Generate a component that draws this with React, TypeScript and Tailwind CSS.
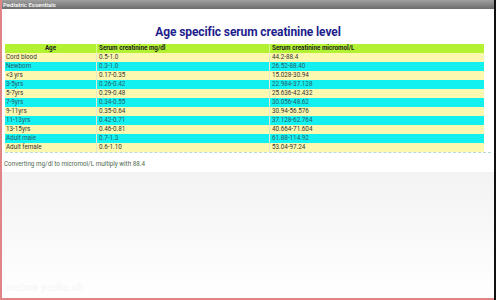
import React from "react";

const rows: [string, string, string][] = [
  ["Cord blood", "0.5-1.0", "44.2-88.4"],
  ["Newborn", "0.3-1.0", "26.52-88.40"],
  ["<3 yrs", "0.17-0.35", "15.028-30.94"],
  ["3-5yrs", "0.26-0.42", "22.984-37.128"],
  ["5-7yrs", "0.29-0.48", "25.636-42.432"],
  ["7-9yrs", "0.34-0.55", "30.056-48.62"],
  ["9-11yrs", "0.35-0.64", "30.94-56.576"],
  ["11-13yrs", "0.42-0.71", "37.128-62.764"],
  ["13-15yrs", "0.46-0.81", "40.664-71.604"],
  ["Adult male", "0.7-1.3", "61.88-114.92"],
  ["Adult female", "0.6-1.10", "53.04-97.24"],
];

export default function App() {
  return (
    <div
      className="w-[496px] h-[300px] flex overflow-hidden bg-white"
      style={{ fontFamily: "Roboto, 'Liberation Sans', sans-serif" }}
    >
      <div className="flex-1 flex flex-col border-l-[2px] border-b-[2px] border-[#e08585]">
        <div className="h-[9px] bg-gradient-to-b from-[#a0a0a0] to-[#6c6c6c] text-white text-[6px] leading-[9px] pl-[1px] font-medium">
          Pediatric Essentials
        </div>
        <div className="h-[13px]" />
        <h1 className="text-center text-[12px] tracking-[-0.1px] leading-[20px] font-bold text-[#1e1e8c]">
          Age specific serum creatinine level
        </h1>
        <div className="h-[2px]" />
        <div className="ml-[3px] w-[479px] text-[6.3px] leading-[9px] text-[#333]">
          <div className="grid grid-cols-[92px_173px_1fr] bg-[#b2f232] font-bold text-[#222] h-[9px]">
            <div className="text-center border-r border-[#d8f890]">Age</div>
            <div className="pl-[2px] border-r border-[#d8f890]">Serum creatinine mg/dl</div>
            <div className="pl-[2px]">Serum creatinine micromol/L</div>
          </div>
          {rows.map((r, i) => (
            <div
              key={i}
              className={
                "grid grid-cols-[92px_173px_1fr] h-[9px] " +
                (i % 2 === 0 ? "bg-[#fdf8b0] text-[#333]" : "bg-[#12f0f0] text-[#2a5c6a]")
              }
            >
              <div className="pl-[1px] border-r border-[#e8e8d0]">{r[0]}</div>
              <div className="pl-[2px] border-r border-[#e8e8d0]">{r[1]}</div>
              <div className="pl-[2px]">{r[2]}</div>
            </div>
          ))}
        </div>
        <div className="ml-[3px] w-[486px] border-b border-dashed border-[#b8d8d8]" />
        <div className="h-[7px]" />
        <div className="pl-[2px] text-[6.3px] leading-[9px] text-[#4f6a4f]">
          Converting mg/dl to micromol/L multiply with 88.4
        </div>
        <div className="h-[3px]" />
        <div className="flex-1 bg-gradient-to-b from-[#f3f3f3] to-[#ffffff] flex flex-col justify-end">
          <div className="pl-[4px] pb-[2px] text-[11px] font-bold text-[#f8f8f8]">
            icebox pedia.uk
          </div>
        </div>
      </div>
      <div className="w-[2px] bg-[#111]" />
    </div>
  );
}
